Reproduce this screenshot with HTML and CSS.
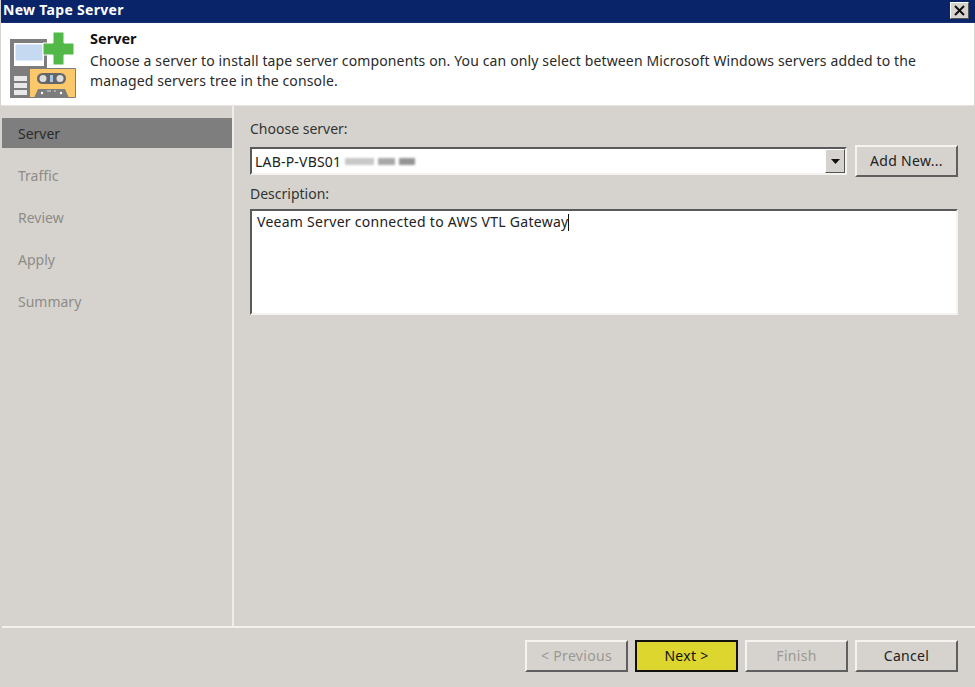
FILE: index.html
```html
<!DOCTYPE html>
<html lang="en">
<head>
<meta charset="utf-8">
<title>New Tape Server</title>
<link rel="stylesheet" href="styles.css">
</head>
<body>
<div class="window">
  <div class="titlebar">
    <span class="title">New Tape Server</span>
    <span class="close"><svg width="13" height="11" viewBox="0 0 13 11"><path d="M2 1l9 9M11 1l-9 9" stroke="#111" stroke-width="2" fill="none"/></svg></span>
  </div>
  <header class="header">
    <svg class="logo" width="66" height="66" viewBox="0 0 66 66">
      <rect x="0" y="7" width="37" height="59" fill="#7d7d7d"/>
      <rect x="4" y="11" width="30" height="23" fill="#fff"/>
      <rect x="5" y="12" width="28" height="17" fill="#c5d9f1" stroke="#fff" stroke-width="1"/>
      <rect x="4" y="44" width="13" height="5" fill="#e8e8e8"/>
      <rect x="4" y="51" width="13" height="5" fill="#e8e8e8"/>
      <rect x="4" y="58" width="13" height="5" fill="#e8e8e8"/>
      <path d="M43 0h11v11h10v12H54v10H43V23H33V11h10z" fill="#52b848" stroke="#fff" stroke-width="1"/>
      <rect x="18" y="36" width="48" height="30" rx="1" fill="#7d7d7d"/>
      <rect x="20" y="37" width="45" height="28" fill="#fbc96b"/>
      <rect x="27" y="41" width="29" height="11" rx="5.500" fill="#666"/>
      <circle cx="33" cy="46.500" r="3.500" fill="#ddd"/>
      <circle cx="50" cy="46.500" r="3.500" fill="#ddd"/>
      <rect x="40" y="43" width="3" height="7" fill="#a8c8e8"/>
      <path d="M24 66l4-9h27l4 9z" fill="#7d7d7d"/>
      <circle cx="32" cy="61" r="1.200" fill="#fff"/><circle cx="51" cy="61" r="1.200" fill="#fff"/>
      <path d="M37 59h4M44 59h2" stroke="#ddd" stroke-width="1"/>
    </svg>
    <div class="header-text">
      <h1 class="heading">Server</h1>
      <p class="desc">Choose a server to install tape server components on. You can only select between Microsoft Windows servers added to the<br>managed servers tree in the console.</p>
    </div>
  </header>
  <div class="body">
    <nav class="sidebar">
      <div class="step step-active">Server</div>
      <div class="step">Traffic</div>
      <div class="step">Review</div>
      <div class="step">Apply</div>
      <div class="step">Summary</div>
    </nav>
    <main class="content">
      <label class="label">Choose server:</label>
      <div class="server-row">
        <div class="combo">
          <span class="combo-value">LAB-P-VBS01<span class="blur"><i class="b1"></i><i class="b2"></i><i class="b3"></i></span></span>
          <span class="combo-btn"><svg width="9" height="5" viewBox="0 0 9 5"><path d="M0 0h9L4.500 5z" fill="#111"/></svg></span>
        </div>
        <button class="btn add-btn">Add New...</button>
      </div>
      <label class="label label-desc">Description:</label>
      <div class="textarea"><span>Veeam Server connected to AWS VTL Gateway</span><span class="caret"></span></div>
    </main>
  </div>
  <footer class="footer">
    <button class="btn btn-disabled">&lt; Previous</button>
    <button class="btn btn-next">Next &gt;</button>
    <button class="btn btn-disabled">Finish</button>
    <button class="btn">Cancel</button>
  </footer>
</div>
</body>
</html>
```
FILE: styles.css
```css
* { box-sizing: border-box; }
html, body { margin: 0; padding: 0; height: 100%; }
body { background: #d6d3ce; font-family: "Noto Sans", sans-serif; font-size: 14px; color: #2a2a2a; overflow: hidden; }
.window { width: 975px; height: 687px; display: flex; flex-direction: column; }
.titlebar { height: 23px; margin-left: 1px; background: #0a246a; display: flex; align-items: center; justify-content: space-between; padding: 0 6px 2px 2px; border-bottom: 1px solid #16306f; }
.title { color: #fff; font-weight: 700; font-size: 14px; letter-spacing: 0.3px; line-height: 20px; }
.close { width: 19px; height: 17px; background: #d6d3ce; border: 1px solid; border-color: #fff #555 #555 #fff; display: flex; align-items: center; justify-content: center; }
.header { height: 83px; margin: 0 1px; background: #fff; display: flex; padding: 7px 0 0 9px; border-bottom: 1px solid #e6e4e0; }
.logo { flex: none; margin: 2px 14px 0 0; }
.heading { margin: 0; font-size: 14.500px; font-weight: 700; color: #111; line-height: 16px; }
.desc { margin: 5px 0 0; font-size: 14px; line-height: 20px; letter-spacing: 0.13px; color: #2a2a2a; }
.body { flex: 1; display: flex; min-height: 0; border-bottom: 2px solid #f2f1ee; margin-left: 2px; }
.sidebar { width: 232px; flex: none; padding-top: 12px; border-right: 2px solid #eeede9; display: flex; flex-direction: column; gap: 12px; }
.step { height: 30px; padding-left: 16px; display: flex; align-items: center; font-size: 14px; color: #8e8c88; }
.step-active { background: #7f7e7e; color: #2b2b2b; }
.content { flex: 1; padding: 13px 17px 0 16px; display: flex; flex-direction: column; }
.label { font-size: 14px; line-height: 20px; color: #333; }
.server-row { display: flex; margin-top: 6px; gap: 8px; align-items: flex-start; }
.combo { flex: 1; height: 28px; background: #fff; border: 2px solid; border-color: #5a5a5a #f4f3f0 #f4f3f0 #5a5a5a; display: flex; align-items: center; justify-content: space-between; margin-top: 2px; }
.combo-value { padding-left: 3px; font-size: 14px; letter-spacing: 0.2px; color: #222; display: flex; align-items: center; }
.blur { display: inline-flex; align-items: center; height: 12px; margin-left: 4px; filter: blur(0.8px); }
.blur i { display: block; height: 7px; margin-right: 4px; }
.b1 { width: 29px; background: #c8c8c8; }
.b2 { width: 17px; background: #a8a8a8; }
.b3 { width: 16px; background: #949494; }
.combo-btn { width: 20px; height: 24px; background: #d6d3ce; border: 1px solid; border-color: #fff #555 #555 #fff; display: flex; align-items: center; justify-content: center; }
.btn { height: 32px; width: 103px; flex: none; background: #d6d3ce; border: 2px solid; border-color: #f4f3f0 #5f5f5f #5f5f5f #f4f3f0; font-family: "Noto Sans", sans-serif; font-size: 14px; letter-spacing: 0.3px; color: #222; padding: 0 0 2px; }
.label-desc { margin-top: 7px; }
.textarea { height: 106px; margin-top: 5px; background: #fff; border: 2px solid; border-color: #5a5a5a #f4f3f0 #f4f3f0 #5a5a5a; padding: 1px 0 0 5px; font-size: 14px; line-height: 20px; letter-spacing: 0.27px; color: #222; }
.caret { display: inline-block; width: 1px; height: 17px; background: #111; vertical-align: -4px; }
.footer { height: 59px; flex: none; display: flex; justify-content: flex-end; gap: 7px; padding: 12px 17px 0 0; }
.btn-disabled { color: #9a9894; }
.btn-next { background: #dcd62f; border-color: #111; color: #111; }
```
